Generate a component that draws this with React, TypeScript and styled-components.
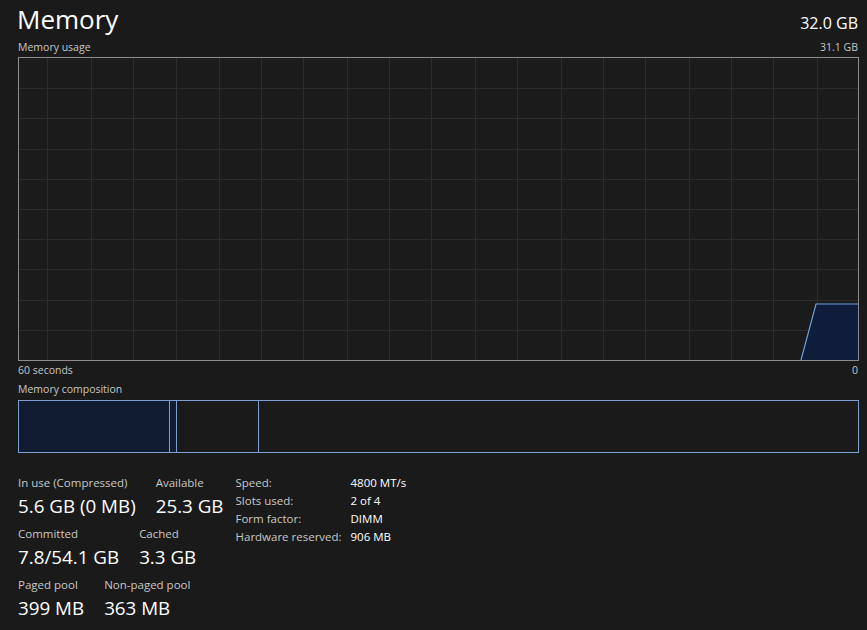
import styled, { createGlobalStyle } from "styled-components";

const GlobalStyle = createGlobalStyle`
  html, body {
    margin: 0;
    padding: 0;
    background: #1a1a1a;
  }
  body {
    font-family: "Open Sans", "Noto Sans", "Liberation Sans", sans-serif;
    color: #ffffff;
  }
`;

const Page = styled.div`
  width: 867px;
  height: 630px;
  box-sizing: border-box;
  padding: 0 8px 0 18px;
  background: #1a1a1a;
  overflow: hidden;
`;

const Header = styled.header`
  display: flex;
  justify-content: space-between;
  align-items: baseline;
  height: 38px;
  padding-right: 1px;
`;

const Title = styled.h1`
  margin: 0;
  font-size: 26px;
  font-weight: 400;
  line-height: 38px;
  color: #ffffff;
  margin-left: -1px;
`;

const Total = styled.span`
  font-size: 16px;
  color: #ffffff;
`;

const CaptionRow = styled.div`
  display: flex;
  justify-content: space-between;
  font-size: 10.5px;
  line-height: 19px;
  height: 19px;
  color: #c6c6c6;
  padding-right: 1px;
`;

const ChartBox = styled.div`
  height: 304px;
  border: 1px solid #8c8c8c;
  box-sizing: border-box;
  background: #1b1b1b;
  svg {
    display: block;
  }
`;

const CompositionBar = styled.div`
  display: flex;
  height: 53px;
  box-sizing: border-box;
  border: 1px solid #7f9fd3;
`;

const Segment = styled.div<{ $width: number; $filled?: boolean; $last?: boolean }>`
  flex: ${(p) => (p.$last ? "1" : `0 0 ${p.$width}px`)};
  box-sizing: border-box;
  background: ${(p) => (p.$filled ? "#111b31" : "transparent")};
  border-right: ${(p) => (p.$last ? "none" : "1px solid #7f9fd3")};
`;

const Gap = styled.div<{ $h: number }>`
  height: ${(p) => p.$h}px;
`;

const Stats = styled.div`
  display: flex;
  gap: 12px;
  margin-top: 21px;
`;

const StatColumn = styled.div`
  display: flex;
  flex-direction: column;
  gap: 3px;
`;

const StatRow = styled.div`
  display: flex;
  gap: 20px;
`;

const Stat = styled.div`
  display: flex;
  flex-direction: column;
`;

const StatLabel = styled.span`
  font-size: 11.5px;
  line-height: 17px;
  color: #c8c8c8;
`;

const StatValue = styled.span`
  font-size: 18.8px;
  line-height: 31px;
  color: #ffffff;
`;

const Specs = styled.div`
  display: grid;
  grid-template-columns: 115px auto;
  grid-auto-rows: 18px;
  font-size: 11.5px;
  line-height: 18px;
  color: #c8c8c8;
`;

const SpecValue = styled.span`
  color: #ffffff;
`;

const vLines = [28, 72, 114, 157, 200, 242, 284, 328, 370, 412, 456, 498, 542, 584, 626, 670, 712, 754, 798];

function UsageChart() {
  const w = 839;
  const h = 302;
  const rows = Array.from({ length: 9 }, (_, i) => Math.round(((i + 1) * h) / 10) + 0.5);
  return (
    <svg width={w} height={h}>
      {vLines.map((x) => (
        <line key={`v${x}`} x1={x + 0.5} y1={0} x2={x + 0.5} y2={h} stroke="#2c2c2c" strokeWidth={1} />
      ))}
      {rows.map((y) => (
        <line key={`h${y}`} x1={0} y1={y} x2={w} y2={y} stroke="#2c2c2c" strokeWidth={1} />
      ))}
      <polygon points={`782,${h} 797,246 ${w},246 ${w},${h}`} fill="#0f1d3a" />
      <polyline points={`782,${h} 797,246 ${w},246`} fill="none" stroke="#6f9ee0" strokeWidth={1.2} />
    </svg>
  );
}

export default function App() {
  const stats = [
    [
      { label: "In use (Compressed)", value: "5.6 GB (0 MB)" },
      { label: "Available", value: "25.3 GB" },
    ],
    [
      { label: "Committed", value: "7.8/54.1 GB" },
      { label: "Cached", value: "3.3 GB" },
    ],
    [
      { label: "Paged pool", value: "399 MB" },
      { label: "Non-paged pool", value: "363 MB" },
    ],
  ];
  const specs = [
    ["Speed:", "4800 MT/s"],
    ["Slots used:", "2 of 4"],
    ["Form factor:", "DIMM"],
    ["Hardware reserved:", "906 MB"],
  ];

  return (
    <>
      <GlobalStyle />
      <Page>
        <Header>
          <Title>Memory</Title>
          <Total>32.0 GB</Total>
        </Header>
        <CaptionRow>
          <span>Memory usage</span>
          <span>31.1 GB</span>
        </CaptionRow>
        <ChartBox>
          <UsageChart />
        </ChartBox>
        <CaptionRow>
          <span>60 seconds</span>
          <span>0</span>
        </CaptionRow>
        <CaptionRow>
          <span>Memory composition</span>
        </CaptionRow>
        <Gap $h={1} />
        <CompositionBar>
          <Segment $width={151} $filled />
          <Segment $width={7} $filled />
          <Segment $width={82} />
          <Segment $width={0} $last />
        </CompositionBar>
        <Stats>
          <StatColumn>
            {stats.map((row, i) => (
              <StatRow key={i}>
                {row.map((s) => (
                  <Stat key={s.label}>
                    <StatLabel>{s.label}</StatLabel>
                    <StatValue>{s.value}</StatValue>
                  </Stat>
                ))}
              </StatRow>
            ))}
          </StatColumn>
          <Specs>
            {specs.map(([k, v]) => (
              <>
                <span key={k}>{k}</span>
                <SpecValue key={v}>{v}</SpecValue>
              </>
            ))}
          </Specs>
        </Stats>
      </Page>
    </>
  );
}
